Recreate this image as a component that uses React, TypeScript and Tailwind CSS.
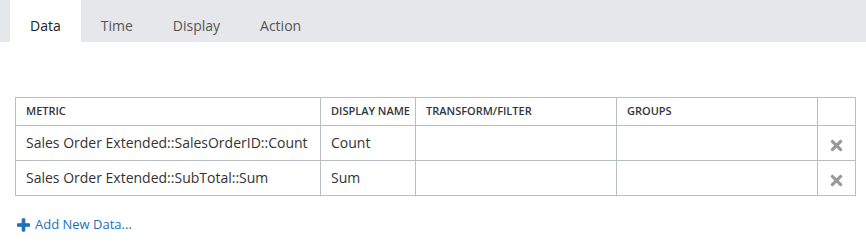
import { FaPlus, FaTimes } from "react-icons/fa";

const tabs = ["Data", "Time", "Display", "Action"];

const rows = [
  { metric: "Sales Order Extended::SalesOrderID::Count", name: "Count" },
  { metric: "Sales Order Extended::SubTotal::Sum", name: "Sum" },
];

export default function App() {
  return (
    <div className="w-[866px] h-[247px] bg-white font-['Open_Sans',sans-serif] text-[#333]">
      <div className="flex h-[42px] bg-[#e5e7ea] pl-[10px]">
        {tabs.map((t, i) => (
          <div
            key={t}
            className={
              i === 0
                ? "px-5 pt-[15px] text-[14px] bg-white text-[#222]"
                : "px-5 pt-[15px] text-[14px] text-[#555]"
            }
          >
            {t}
          </div>
        ))}
      </div>

      <div className="px-[15px] pt-[55px]">
        <table className="w-[841px] border-collapse border border-[#b9bec4] table-fixed">
          <colgroup>
            <col className="w-[305px]" />
            <col className="w-[95px]" />
            <col className="w-[201px]" />
            <col className="w-[201px]" />
            <col />
          </colgroup>
          <thead>
            <tr className="h-[28px] text-left text-[11px] font-semibold text-[#2f3640]">
              <th className="border border-[#b9bec4] px-[10px] font-semibold">METRIC</th>
              <th className="border border-[#b9bec4] px-[10px] font-semibold whitespace-nowrap">DISPLAY NAME</th>
              <th className="border border-[#b9bec4] px-[10px] font-semibold">TRANSFORM/FILTER</th>
              <th className="border border-[#b9bec4] px-[10px] font-semibold">GROUPS</th>
              <th className="border border-[#b9bec4]"></th>
            </tr>
          </thead>
          <tbody>
            {rows.map((r) => (
              <tr key={r.metric} className="h-[35px] text-[14px]">
                <td className="border border-[#b9bec4] px-[10px] pb-[1px] whitespace-nowrap">{r.metric}</td>
                <td className="border border-[#b9bec4] px-[10px] pb-[1px]">{r.name}</td>
                <td className="border border-[#b9bec4]"></td>
                <td className="border border-[#b9bec4]"></td>
                <td className="border border-[#b9bec4] text-center">
                  <FaTimes className="inline-block w-[17px] h-[17px] text-[#999] mt-[2px]" />
                </td>
              </tr>
            ))}
          </tbody>
        </table>

        <div className="flex items-center gap-[5px] mt-[19px] ml-[2px] text-[13px] text-[#1e70b8]">
          <FaPlus className="w-[13px] h-[14px]" stroke="currentColor" strokeWidth={40} />
          <span>Add New Data...</span>
        </div>
      </div>
    </div>
  );
}
